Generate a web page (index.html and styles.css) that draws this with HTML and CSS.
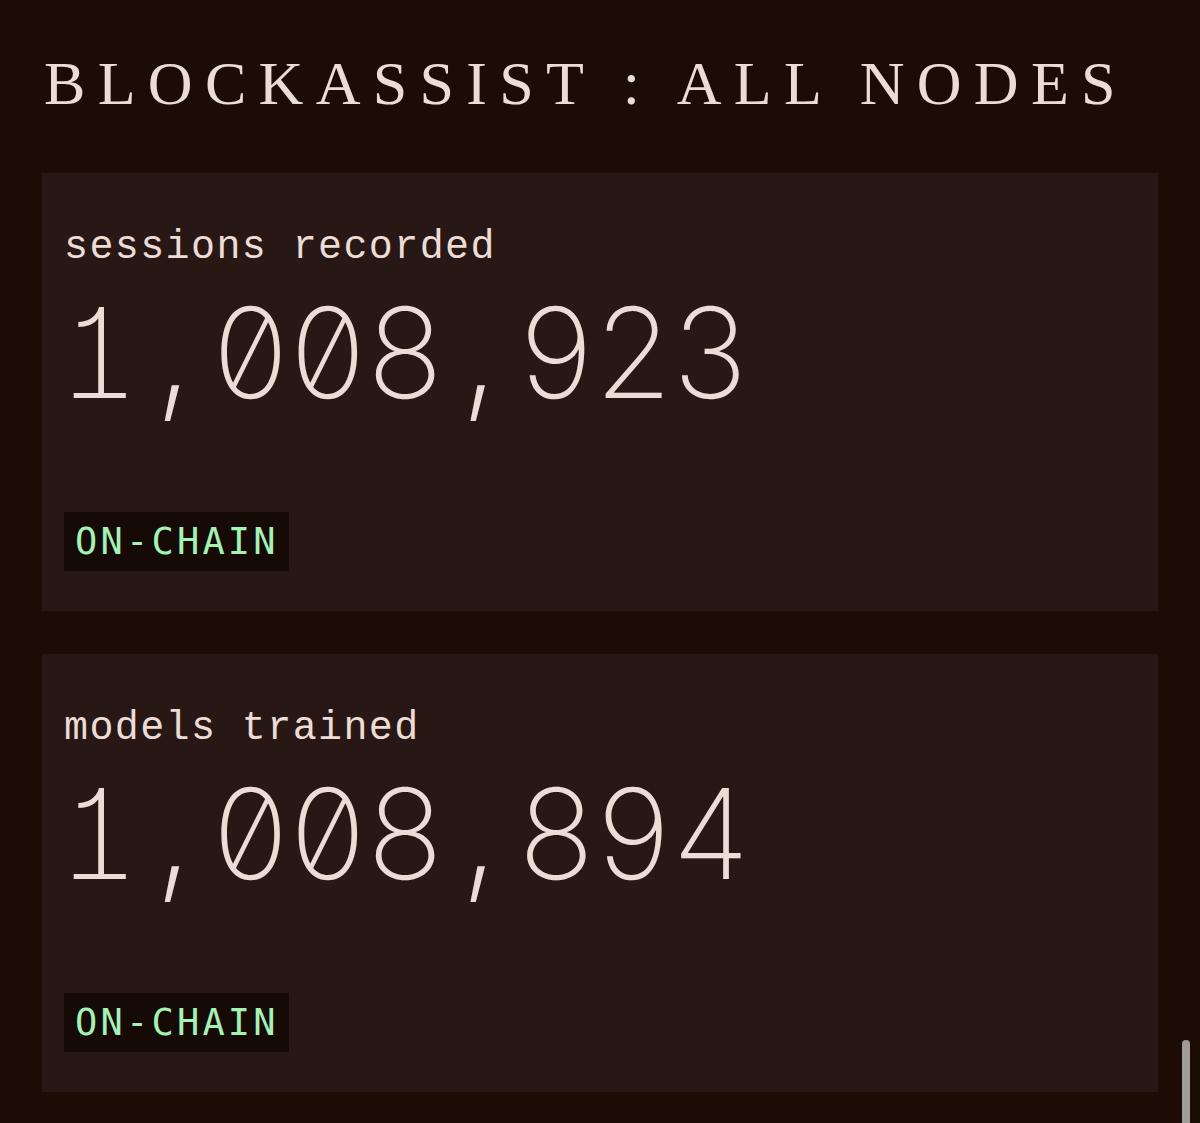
FILE: index.html
```html
<!DOCTYPE html>
<html lang="en">
<head>
<meta charset="utf-8">
<title>BlockAssist : All Nodes</title>
<link rel="stylesheet" href="styles.css">
</head>
<body>
<main class="page">
  <h1 class="title">BLOCKASSIST : ALL NODES</h1>
  <section class="stats">
    <article class="card">
      <div class="label">sessions recorded</div>
      <div class="value">1<span class="sep">,</span>008<span class="sep">,</span>923</div>
      <div class="tag-row"><span class="tag">ON-CHAIN</span></div>
    </article>
    <article class="card">
      <div class="label">models trained</div>
      <div class="value">1<span class="sep">,</span>008<span class="sep">,</span>894</div>
      <div class="tag-row"><span class="tag">ON-CHAIN</span></div>
    </article>
  </section>
</main>
<div class="scroll-thumb"></div>
</body>
</html>
```

FILE: styles.css
```css
html, body {
  margin: 0;
  padding: 0;
  background: #1b0d06;
}
body {
  color: #ecdcd5;
  font-family: "Liberation Mono", "DejaVu Sans Mono", monospace;
  overflow: hidden;
}
.page {
  padding: 52px 42px 0 42px;
}
.title {
  margin: 0 0 59px 0;
  padding-left: 2px;
  font-family: "Liberation Serif", "DejaVu Serif", serif;
  font-weight: normal;
  font-size: 62px;
  line-height: 62px;
  height: 62px;
  letter-spacing: 12.3px;
  white-space: nowrap;
  color: #ecdcd5;
}
.stats {
  display: flex;
  flex-direction: column;
  gap: 43px;
}
.card {
  background: #271816;
  padding: 55px 22px 40px 22px;
  display: flex;
  flex-direction: column;
}
.label {
  font-size: 40px;
  line-height: 40px;
  letter-spacing: 1.4px;
  color: #ecdcd5;
}
.value {
  margin-top: 22px;
  margin-left: -5px;
  font-family: Inter, "DejaVu Sans", sans-serif;
  font-weight: 250;
  font-size: 125px;
  line-height: 125px;
  height: 125px;
  font-feature-settings: "zero", "tnum", "cv01";
  letter-spacing: -3.5px;
  white-space: nowrap;
  color: #ecdcd5;
}
.sep {
  display: inline-block;
  width: 74px;
  text-align: center;
  letter-spacing: 0;
  font-size: 150px;
  line-height: 0;
  vertical-align: baseline;
}
.tag-row {
  margin-top: 97px;
  display: flex;
}
.tag {
  display: inline-block;
  background: #150a05;
  color: #a5f2b5;
  font-family: "DejaVu Sans Mono", "Liberation Mono", monospace;
  font-size: 37px;
  line-height: 59px;
  height: 59px;
  letter-spacing: 3.2px;
  padding: 0 10px 0 11px;
}
.scroll-thumb {
  position: fixed;
  right: 10px;
  top: 1040px;
  width: 8px;
  height: 120px;
  border-radius: 4px;
  background: #a09a98;
}
```
